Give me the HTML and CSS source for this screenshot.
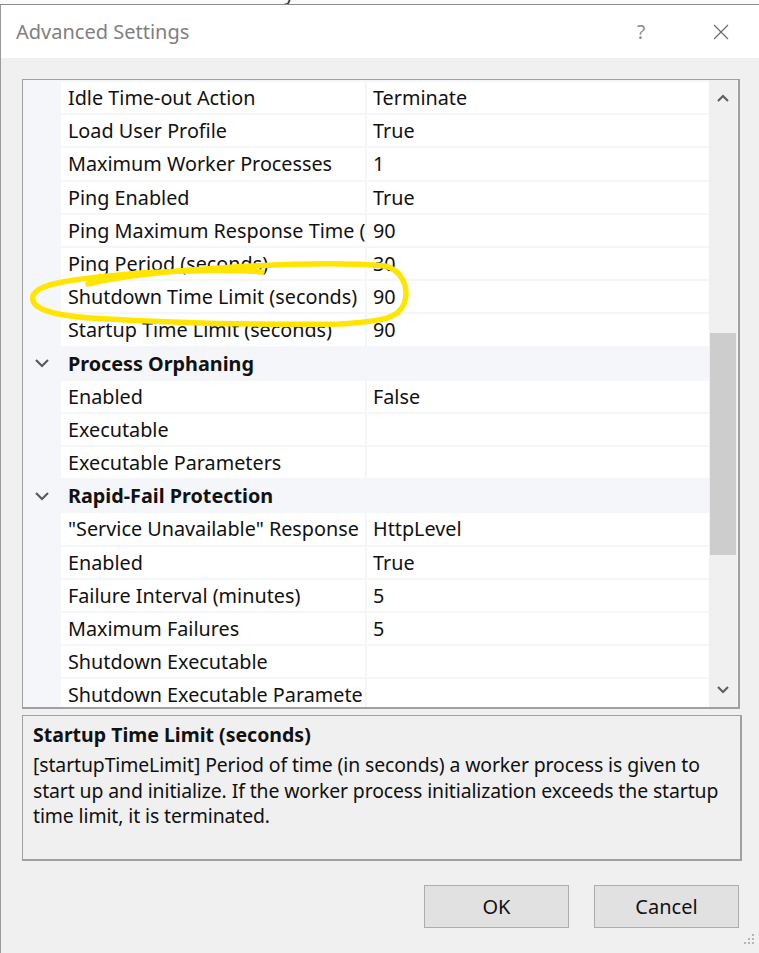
FILE: index.html
```html
<html>
<head>
<title>Advanced Settings</title>
<link rel="stylesheet" href="styles.css">
</head>
<body>

<div class="backdrop"><span class="backText">Idle Worker Process Identity - WebService</span></div>

<div class="window">

<div class="titlebar">
  <span class="title">Advanced Settings</span>
  <span class="help">?</span>
  <span class="close">
    <svg width="16" height="16" viewBox="0 0 16 16"><path d="M1 1 L15 15 M15 1 L1 15" stroke="#6b6b6b" stroke-width="1.2" fill="none"/></svg>
  </span>
</div>

<div class="content">

<div class="grid">
  <div class="rows">
    <div class="row"><div class="margin"></div><div class="name">Idle Time-out Action</div><div class="value">Terminate</div></div>
    <div class="row"><div class="margin"></div><div class="name">Load User Profile</div><div class="value">True</div></div>
    <div class="row"><div class="margin"></div><div class="name">Maximum Worker Processes</div><div class="value">1</div></div>
    <div class="row"><div class="margin"></div><div class="name">Ping Enabled</div><div class="value">True</div></div>
    <div class="row"><div class="margin"></div><div class="name">Ping Maximum Response Time (</div><div class="value">90</div></div>
    <div class="row"><div class="margin"></div><div class="name">Ping Period (seconds)</div><div class="value">30</div></div>
    <div class="row"><div class="margin"></div><div class="name">Shutdown Time Limit (seconds)</div><div class="value">90</div></div>
    <div class="row"><div class="margin"></div><div class="name">Startup Time Limit (seconds)</div><div class="value">90</div></div>
    <div class="row category">
      <div class="margin"><svg width="16" height="10" viewBox="0 0 16 10"><path d="M2 2 L8 8 L14 2" stroke="#5a5a5a" stroke-width="2.2" fill="none"/></svg></div>
      <div class="catName">Process Orphaning</div>
    </div>
    <div class="row"><div class="margin"></div><div class="name">Enabled</div><div class="value">False</div></div>
    <div class="row"><div class="margin"></div><div class="name">Executable</div><div class="value"></div></div>
    <div class="row"><div class="margin"></div><div class="name">Executable Parameters</div><div class="value"></div></div>
    <div class="row category">
      <div class="margin"><svg width="16" height="10" viewBox="0 0 16 10"><path d="M2 2 L8 8 L14 2" stroke="#5a5a5a" stroke-width="2.2" fill="none"/></svg></div>
      <div class="catName">Rapid-Fail Protection</div>
    </div>
    <div class="row"><div class="margin"></div><div class="name">"Service Unavailable" Response</div><div class="value">HttpLevel</div></div>
    <div class="row"><div class="margin"></div><div class="name">Enabled</div><div class="value">True</div></div>
    <div class="row"><div class="margin"></div><div class="name">Failure Interval (minutes)</div><div class="value">5</div></div>
    <div class="row"><div class="margin"></div><div class="name">Maximum Failures</div><div class="value">5</div></div>
    <div class="row"><div class="margin"></div><div class="name">Shutdown Executable</div><div class="value"></div></div>
    <div class="row"><div class="margin"></div><div class="name">Shutdown Executable Paramete</div><div class="value"></div></div>
  </div>

  <div class="scrollbar">
    <div class="arrow"><svg width="14" height="9" viewBox="0 0 14 9"><path d="M2 7 L7 2 L12 7" stroke="#606060" stroke-width="2.2" fill="none"/></svg></div>
    <div class="track"><div class="thumb"></div></div>
    <div class="arrow"><svg width="14" height="9" viewBox="0 0 14 9"><path d="M2 2 L7 7 L12 2" stroke="#606060" stroke-width="2.2" fill="none"/></svg></div>
  </div>
</div>

<div class="desc">
  <div class="descTitle">Startup Time Limit (seconds)</div>
  <div class="descText">[startupTimeLimit] Period of time (in seconds) a worker process is given to start up and initialize. If the worker process initialization exceeds the startup time limit, it is terminated.</div>
</div>

<div class="buttons">
  <button class="button">OK</button>
  <button class="button">Cancel</button>
  <svg class="grip" width="12" height="12" viewBox="0 0 12 12" fill="#b5b5b5">
    <rect x="9" y="1" width="2" height="2"/>
    <rect x="5" y="5" width="2" height="2"/><rect x="9" y="5" width="2" height="2"/>
    <rect x="1" y="9" width="2" height="2"/><rect x="5" y="9" width="2" height="2"/><rect x="9" y="9" width="2" height="2"/>
  </svg>
</div>

</div>
</div>

<svg class="annotation" width="759" height="953" viewBox="0 0 759 953">
  <path d="M88 284 C 120 276, 170 271, 220 268 C 280 264, 340 262, 385 266 C 402 270, 410 288, 404 304 C 398 318, 385 321, 340 324 C 270 325, 170 323, 90 318 C 50 315, 30 308, 33 296 C 36 284, 70 279, 140 273 C 190 270, 240 270, 262 272"
        stroke="#ffe500" stroke-width="5.5" fill="none" stroke-linecap="round"/>
</svg>

</body>
</html>
```

FILE: styles.css
```css
body {
  margin: 0;
  background-color: #f0f0f0;
  font-family: "Noto Sans", "Open Sans", sans-serif;
  position: relative;
  height: 953px;
  overflow: hidden;
}

.backdrop {
  height: 4px;
  overflow: hidden;
  background-color: #fafafa;
  border-bottom: 1px solid #8c8c8c;
  padding-left: 30px;
}

.backText {
  display: block;
  margin-top: -19px;
  font-size: 20px;
  line-height: 24px;
  color: #333;
}

.window {
  border-left: 1px solid #9a9a9a;
  height: 948px;
}

.titlebar {
  height: 53px;
  background-color: #ffffff;
  display: flex;
  align-items: center;
  padding-left: 15px;
}

.title {
  font-size: 20px;
  color: #808080;
  flex: 1;
}

.help {
  font-size: 19px;
  color: #8a8a8a;
  width: 30px;
  margin-right: 57px;
  text-align: center;
}

.close {
  width: 16px;
  margin-right: 30px;
  display: flex;
}

.content {
  padding: 21px 0 0 21px;
}

/* property grid */

.grid {
  width: 715px;
  height: 627px;
  border: 1px solid #a0a0a0;
  border-right-width: 2px;
  border-bottom-width: 2px;
  display: flex;
  background-color: #f4f6fa;
}

.rows {
  width: 686px;
  overflow: hidden;
  display: flex;
  flex-direction: column;
  gap: 2px;
  padding-top: 2px;
}

.row {
  display: flex;
  height: 31.2px;
  flex-shrink: 0;
  font-size: 19.8px;
  color: #111;
}

.margin {
  width: 38px;
  flex-shrink: 0;
  display: flex;
  align-items: center;
  justify-content: center;
}

.name {
  width: 297px;
  padding-left: 7px;
  background-color: #ffffff;
  margin-right: 2px;
  white-space: nowrap;
  overflow: hidden;
  line-height: 31px;
}

.value {
  flex: 1;
  padding-left: 6px;
  background-color: #ffffff;
  white-space: nowrap;
  overflow: hidden;
  line-height: 31px;
}

.catName {
  padding-left: 7px;
  font-weight: bold;
  line-height: 31px;
}

.scrollbar {
  width: 28px;
  background-color: #f0f0f0;
  display: flex;
  flex-direction: column;
}

.arrow {
  height: 36px;
  display: flex;
  align-items: center;
  justify-content: center;
}

.track {
  flex: 1;
}

.thumb {
  margin: 217px 1px 0 1px;
  height: 222px;
  background-color: #cdcdcd;
}

/* description */

.desc {
  width: 705px;
  height: 137px;
  margin-top: 6px;
  border: 1px solid #a0a0a0;
  border-right-width: 2px;
  border-bottom-width: 2px;
  padding: 6px 2px 0 10px;
  color: #111;
}

.descTitle {
  font-size: 19.5px;
  font-weight: bold;
  line-height: 26px;
}

.descText {
  font-size: 19.4px;
  letter-spacing: -0.1px;
  line-height: 25.5px;
  margin-top: 4px;
}

/* buttons */

.buttons {
  width: 717px;
  margin-top: 24px;
  display: flex;
  justify-content: flex-end;
  gap: 25px;
  position: relative;
}

.button {
  width: 145px;
  height: 43px;
  background-color: #e1e1e1;
  border: 1px solid #adadad;
  font-family: "Noto Sans", "Open Sans", sans-serif;
  font-size: 20px;
  color: #111;
}

.grip {
  position: absolute;
  right: -16px;
  top: 48px;
}

.annotation {
  position: absolute;
  left: 0;
  top: 0;
  pointer-events: none;
}
```
